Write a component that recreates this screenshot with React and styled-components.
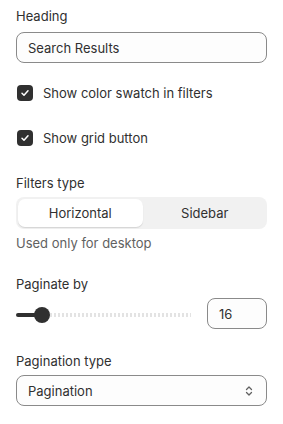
import React, { useState } from "react";
import styled, { createGlobalStyle } from "styled-components";

const GlobalStyle = createGlobalStyle`
  html, body {
    margin: 0;
    padding: 0;
    background: #fff;
    font-family: Inter, "Liberation Sans", sans-serif;
    color: #303030;
  }
  * { box-sizing: border-box; }
`;

const Panel = styled.div`
  width: 283px;
  padding: 8px 16px 16px;
  display: flex;
  flex-direction: column;
`;

const Field = styled.div`
  display: flex;
  flex-direction: column;
  margin-bottom: ${(p) => p.$gap || 0}px;
`;

const Label = styled.div`
  font-size: 13px;
  line-height: 16px;
  color: #303030;
  margin-bottom: ${(p) => p.$gap ?? 6}px;
`;

const TextBox = styled.div`
  height: 31px;
  border: 1px solid #8a8a8a;
  border-radius: 8px;
  background: #fdfdfd;
  display: flex;
  align-items: center;
  padding: 0 11px;
  font-size: 13px;
  color: #303030;
  justify-content: space-between;
`;

const CheckRow = styled.label`
  display: flex;
  align-items: center;
  gap: 10px;
  font-size: 13px;
  color: #303030;
  height: 16px;
  margin-left: 1px;
`;

const Box = styled.span`
  width: 16px;
  height: 16px;
  border-radius: 4px;
  background: #303030;
  display: flex;
  align-items: center;
  justify-content: center;
  flex: none;
`;

const Segmented = styled.div`
  height: 32px;
  border-radius: 8px;
  background: #f1f1f1;
  display: grid;
  grid-template-columns: 1fr 1fr;
  padding: 2px 0 2px 2px;
`;

const Segment = styled.div`
  display: flex;
  align-items: center;
  justify-content: center;
  font-size: 13px;
  color: #303030;
  border-radius: 7px;
  background: ${(p) => (p.$active ? "#fff" : "transparent")};
  box-shadow: ${(p) => (p.$active ? "0 1px 1px rgba(0,0,0,0.12)" : "none")};
`;

const Help = styled.div`
  font-size: 13px;
  color: #616161;
  margin-top: 6px;
`;

const SliderRow = styled.div`
  display: flex;
  align-items: center;
  gap: 16px;
`;

const Track = styled.div`
  flex: 1;
  height: 16px;
  margin-top: 3px;
  display: flex;
  align-items: center;
`;

const Filled = styled.div`
  height: 4px;
  background: #303030;
  border-radius: 2px;
`;

const Rest = styled.div`
  flex: 1;
  height: 4px;
  background: repeating-linear-gradient(
    to right,
    #e3e3e3 0 2px,
    transparent 2px 4px
  );
`;

const Thumb = styled.div`
  width: 16px;
  height: 16px;
  border-radius: 50%;
  background: #303030;
  flex: none;
  margin-left: -8px;
  margin-right: -8px;
  position: relative;
`;

const NumberBox = styled(TextBox)`
  width: 60px;
  flex: none;
`;

const Check = () => (
  <Box>
    <svg width="10" height="10" viewBox="0 0 10 10">
      <path d="M2 5.2l2 2 4-4.4" fill="none" stroke="#fff" strokeWidth="1.5" strokeLinecap="round" strokeLinejoin="round" />
    </svg>
  </Box>
);

export default function App() {
  const [value] = useState(16);
  const pct = 26;
  return (
    <>
      <GlobalStyle />
      <Panel>
        <Field $gap={22}>
          <Label $gap={8}>Heading</Label>
          <TextBox>Search Results</TextBox>
        </Field>
        <Field $gap={29}>
          <CheckRow>
            <Check />
            Show color swatch in filters
          </CheckRow>
        </Field>
        <Field $gap={29}>
          <CheckRow>
            <Check />
            Show grid button
          </CheckRow>
        </Field>
        <Field $gap={25}>
          <Label>Filters type</Label>
          <Segmented>
            <Segment $active>Horizontal</Segment>
            <Segment>Sidebar</Segment>
          </Segmented>
          <Help>Used only for desktop</Help>
        </Field>
        <Field $gap={24}>
          <Label>Paginate by</Label>
          <SliderRow>
            <Track>
              <Filled style={{ width: pct + "px" }} />
              <Thumb />
              <Rest />
            </Track>
            <NumberBox>{value}</NumberBox>
          </SliderRow>
        </Field>
        <Field>
          <Label>Pagination type</Label>
          <TextBox>
            Pagination
            <svg width="12" height="14" viewBox="0 0 12 14">
              <path d="M3.5 5.5L6 3l2.5 2.5M3.5 8.5L6 11l2.5-2.5" fill="none" stroke="#616161" strokeWidth="1.3" strokeLinecap="round" strokeLinejoin="round" />
            </svg>
          </TextBox>
        </Field>
      </Panel>
    </>
  );
}
